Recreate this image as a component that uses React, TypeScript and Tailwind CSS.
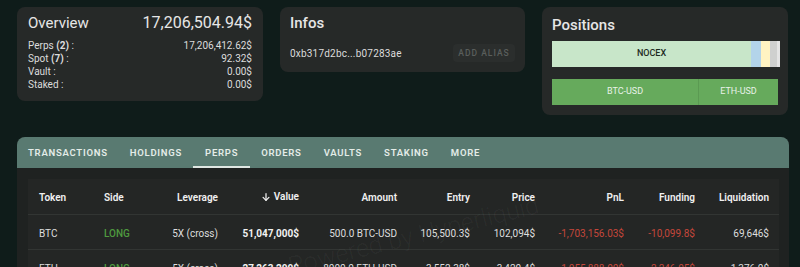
import React from "react";

const cols = [
  { key: "token", label: "Token", w: "w-[66px]", align: "text-left pl-[11px]" },
  { key: "side", label: "Side", w: "w-[57px]", align: "text-left pl-[10px]" },
  { key: "lev", label: "Leverage", w: "w-[67px]", align: "text-right" },
  { key: "value", label: "Value", w: "w-[81px]", align: "text-right" },
  { key: "amount", label: "Amount", w: "w-[98px]", align: "text-right" },
  { key: "entry", label: "Entry", w: "w-[73px]", align: "text-right" },
  { key: "price", label: "Price", w: "w-[65px]", align: "text-right" },
  { key: "pnl", label: "PnL", w: "w-[89px]", align: "text-right" },
  { key: "funding", label: "Funding", w: "w-[71px]", align: "text-right" },
  { key: "liq", label: "Liquidation", w: "w-[74px]", align: "text-right" },
];

const rows = [
  {
    token: "BTC",
    side: "LONG",
    lev: "5X (cross)",
    value: "51,047,000$",
    amount: "500.0 BTC-USD",
    entry: "105,500.3$",
    price: "102,094$",
    pnl: "-1,703,156.03$",
    funding: "-10,099.8$",
    liq: "69,646$",
  },
  {
    token: "ETH",
    side: "LONG",
    lev: "5X (cross)",
    value: "27,263,200$",
    amount: "8000.0 ETH-USD",
    entry: "3,552.38$",
    price: "3,420.4$",
    pnl: "-1,055,888.00$",
    funding: "-2,246.05$",
    liq: "1,376.0$",
  },
];

const tabs = ["TRANSACTIONS", "HOLDINGS", "PERPS", "ORDERS", "VAULTS", "STAKING", "MORE"];

export default function App() {
  return (
    <div
      className="w-[800px] h-[267px] overflow-hidden bg-[#0f1c1a] text-[#e6e6e6]"
      style={{ fontFamily: "Roboto, 'Liberation Sans', sans-serif" }}
    >
      <div className="flex gap-[17px] pl-[17px] pt-[7px] w-[789px] box-content items-start">
        {/* Overview */}
        <div className="w-[246px] h-[94px] rounded-lg bg-[#262928] px-[11px] pt-[5px]">
          <div className="flex items-baseline justify-between">
            <span className="text-[15px] leading-[22px]">Overview</span>
            <span className="text-[16px] leading-[22px]">17,206,504.94$</span>
          </div>
          <div className="mt-[5px] text-[10px] leading-[13px] text-[#dcdcdc]">
            <div className="flex justify-between">
              <span>
                Perps <span className="font-bold">(2)</span> :
              </span>
              <span>17,206,412.62$</span>
            </div>
            <div className="flex justify-between">
              <span>
                Spot <span className="font-bold">(7)</span> :
              </span>
              <span>92.32$</span>
            </div>
            <div className="flex justify-between">
              <span>Vault :</span>
              <span>0.00$</span>
            </div>
            <div className="flex justify-between">
              <span>Staked :</span>
              <span>0.00$</span>
            </div>
          </div>
        </div>

        {/* Infos */}
        <div className="w-[245px] h-[65px] rounded-lg bg-[#262928] pl-[10px] pr-[10px] pt-[5px]">
          <div className="text-[15px] leading-[22px] font-medium">Infos</div>
          <div className="mt-[10px] flex items-center justify-between">
            <span className="text-[10px] text-[#dcdcdc] tracking-[0.2px]">0xb317d2bc...b07283ae</span>
            <span className="w-[62px] h-[18px] flex items-center justify-center rounded bg-[#2b2e2d] text-[8.5px] font-medium tracking-[1px] text-[#5a5e5c]">
              ADD ALIAS
            </span>
          </div>
        </div>

        {/* Positions */}
        <div className="w-[246px] h-[108px] rounded-lg bg-[#262928] pl-[10px] pr-[8px] pt-[7px]">
          <div className="text-[15px] leading-[22px] font-medium">Positions</div>
          <div className="mt-[5px] h-[26px] flex w-[228px] text-[9px] text-[#1e2b1f]">
            <div className="w-[199px] bg-[#c8e6c9] flex items-center justify-center font-medium">NOCEX</div>
            <div className="w-[10px] bg-[#b3d4ea]" />
            <div className="w-[9px] bg-[#fff3c2]" />
            <div className="w-[7px] bg-[#cfd0cf]" />
            <div className="w-[3px] bg-[#e4e4e4]" />
          </div>
          <div className="mt-[12px] h-[26px] flex w-[226px] text-[9px] text-[#e8f2e8]">
            <div className="w-[147px] bg-[#66aa5c] flex items-center justify-center border-r border-[#5b9a52]">BTC-USD</div>
            <div className="flex-1 bg-[#66aa5c] flex items-center justify-center">ETH-USD</div>
          </div>
        </div>
      </div>

      {/* Tabs panel */}
      <div className="relative ml-[17px] mt-[22px] w-[772px] rounded-t-lg bg-[#1f2221] overflow-hidden h-[130px]">
        <div className="h-[31px] bg-[#597a71] flex items-stretch">
          {tabs.map((t) => (
            <div
              key={t}
              className={
                "relative flex items-center pt-[1px] text-[9.5px] font-semibold tracking-[0.75px] text-[#e4ece8] " +
                (t === "PERPS" ? "px-[12px]" : "px-[11px]")
              }
            >
              {t}
              {t === "PERPS" && (
                <div className="absolute left-0 right-0 bottom-0 h-[2px] bg-[#dfe6e2]" />
              )}
            </div>
          ))}
        </div>
        <div className="pl-[11px] pr-[10px] pt-[11px]">
          <div className="bg-[#242625]">
            <div className="flex h-[36px] items-center pt-[2px] border-b border-[#323533] text-[10px] font-semibold text-[#f0f0f0]">
              {cols.map((c) => (
                <div key={c.key} className={c.w + " " + c.align}>
                  {c.key === "value" ? (
                    <span className="inline-flex items-center gap-[3px]">
                      <svg width="10" height="10" viewBox="0 0 24 24" fill="none" stroke="currentColor" strokeWidth="3" strokeLinecap="round" strokeLinejoin="round">
                        <path d="M12 4v16" />
                        <path d="M5 13l7 7 7-7" />
                      </svg>
                      {c.label}
                    </span>
                  ) : (
                    c.label
                  )}
                </div>
              ))}
            </div>
            {rows.map((r, i) => (
              <div key={i} className="flex h-[35px] items-center pt-[2px] border-b border-[#323533] text-[10px] text-[#dedede]">
                {cols.map((c) => {
                  const v = (r as any)[c.key] as string;
                  let cls = "";
                  if (c.key === "side") cls = "text-[#4f9a3f] font-medium";
                  if (c.key === "value") cls = "font-bold text-[#f2f2f2]";
                  if (c.key === "pnl" || c.key === "funding") cls = "text-[#c4463b]";
                  return (
                    <div key={c.key} className={c.w + " " + c.align + " " + cls}>
                      {v}
                    </div>
                  );
                })}
              </div>
            ))}
          </div>
        </div>
        <div
          className="pointer-events-none absolute left-[268px] top-[80px] text-[25px] font-light text-white/[0.045] whitespace-nowrap -rotate-[14deg]"
        >
          Powered by Hyperliquid
        </div>
      </div>
    </div>
  );
}
